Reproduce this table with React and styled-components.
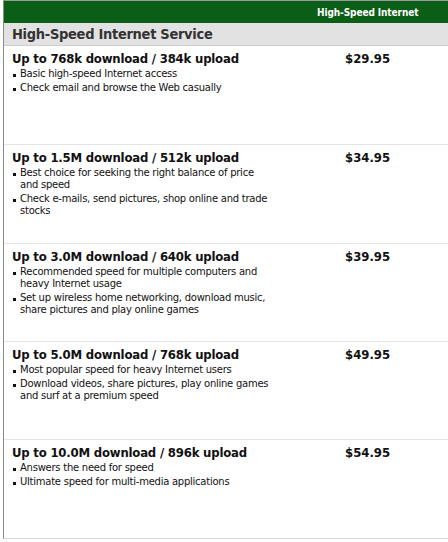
import React from "react";
import styled, { createGlobalStyle } from "styled-components";

const Global = createGlobalStyle`
  html, body { margin: 0; padding: 0; background: #fff; }
  body { font-family: "DejaVu Sans", Verdana, sans-serif; color: #111; }
`;

const Frame = styled.div`
  margin-left: 3px;
  border-left: 1px solid #8a8a8a;
  border-top: 1px solid #9a9a9a;
  border-bottom: 1px solid #d8d8d8;
  width: 460px;
`;

const TopBar = styled.div`
  background: #0a5e16;
  height: 22px;
  display: grid;
  grid-template-columns: 313px 1fr;
  align-items: center;
`;

const TopLabel = styled.div`
  grid-column: 2;
  color: #fff;
  font-family: "DejaVu Sans Condensed", "DejaVu Sans", sans-serif;
  font-stretch: condensed;
  font-weight: bold;
  font-size: 10px;
  letter-spacing: -0.1px;
`;

const SectionHead = styled.div`
  background: #e2e2e2;
  height: 22px;
  border-bottom: 1px solid #cfcfcf;
  display: flex;
  align-items: center;
  padding-left: 8px;
  font-family: "DejaVu Sans Condensed", "DejaVu Sans", sans-serif;
  font-stretch: condensed;
  font-size: 14.5px;
  font-weight: bold;
  color: #333;
  letter-spacing: -0.3px;
`;

const Row = styled.div`
  height: ${(p) => p.$h}px;
  box-sizing: border-box;
  border-bottom: ${(p) => (p.$last ? "none" : "1px solid #e6e6e6")};
  display: grid;
  grid-template-columns: 333px 1fr;
  padding: 5px 0 0 8px;
`;

const Title = styled.div`
  font-family: "DejaVu Sans Condensed", "DejaVu Sans", sans-serif;
  font-stretch: condensed;
  font-size: 13px;
  font-weight: bold;
  letter-spacing: -0.2px;
  line-height: 16px;
  margin-bottom: 1px;
`;

const Price = styled.div`
  font-family: "DejaVu Sans Condensed", "DejaVu Sans", sans-serif;
  font-stretch: condensed;
  font-size: 13px;
  font-weight: bold;
  line-height: 16px;
  letter-spacing: 0px;
`;

const List = styled.ul`
  list-style: none;
  margin: 0;
  padding: 0;
  width: 262px;
`;

const Item = styled.li`
  position: relative;
  padding-left: 8px;
  font-size: 10px;
  line-height: 12px;
  letter-spacing: -0.25px;
  margin-bottom: 2px;
  &::before {
    content: "";
    position: absolute;
    left: 1px;
    top: 6px;
    width: 3px;
    height: 3px;
    background: #111;
  }
`;

const plans = [
  {
    title: "Up to 768k download / 384k upload",
    price: "$29.95",
    h: 99,
    items: ["Basic high-speed Internet access", "Check email and browse the Web casually"],
  },
  {
    title: "Up to 1.5M download / 512k upload",
    price: "$34.95",
    h: 99,
    items: [
      "Best choice for seeking the right balance of price and speed",
      "Check e-mails, send pictures, shop online and trade stocks",
    ],
  },
  {
    title: "Up to 3.0M download / 640k upload",
    price: "$39.95",
    h: 98,
    items: [
      "Recommended speed for multiple computers and heavy Internet usage",
      "Set up wireless home networking, download music, share pictures and play online games",
    ],
  },
  {
    title: "Up to 5.0M download / 768k upload",
    price: "$49.95",
    h: 98,
    items: [
      "Most popular speed for heavy Internet users",
      "Download videos, share pictures, play online games and surf at a premium speed",
    ],
  },
  {
    title: "Up to 10.0M download / 896k upload",
    price: "$54.95",
    h: 98,
    items: ["Answers the need for speed", "Ultimate speed for multi-media applications"],
  },
];

export default function App() {
  return (
    <>
      <Global />
      <Frame>
        <TopBar>
          <TopLabel>High-Speed Internet</TopLabel>
        </TopBar>
        <SectionHead>High-Speed Internet Service</SectionHead>
        {plans.map((p, i) => (
          <Row key={p.title} $h={p.h} $last={i === plans.length - 1}>
            <div>
              <Title>{p.title}</Title>
              <List>
                {p.items.map((t) => (
                  <Item key={t}>{t}</Item>
                ))}
              </List>
            </div>
            <Price>{p.price}</Price>
          </Row>
        ))}
      </Frame>
    </>
  );
}
